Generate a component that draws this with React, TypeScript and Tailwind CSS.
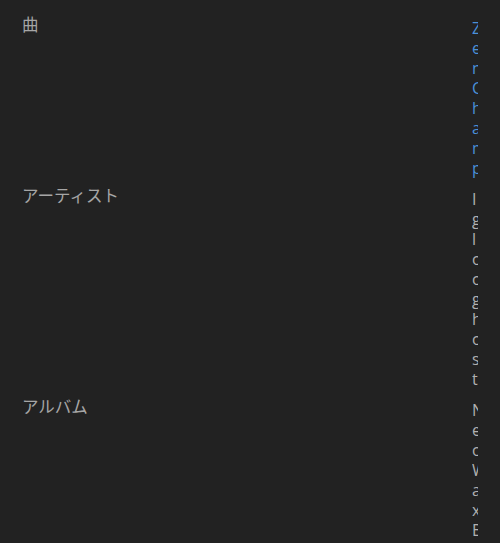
import React from "react";

const rows = [
  { label: "曲", value: "Zen Champ", link: true },
  { label: "アーティスト", value: "Iglooghost", link: false },
  { label: "アルバム", value: "Neo Wax Bloom", link: false },
];

export default function App() {
  return (
    <div className="h-[543px] w-full overflow-hidden bg-[#222222] pt-[9px]">
      <dl className="flex flex-col">
        {rows.map((row) => (
          <div key={row.label} className="flex pt-[5px] pb-[2px] pl-[22px] pr-[22px]">
            <dt className="flex-1 text-[16.5px] leading-[20px] text-[#a6a6a6] [font-family:'Noto_Sans_CJK_JP','Noto_Sans',sans-serif]">
              {row.label}
            </dt>
            <dd
              className={
                "w-[6px] overflow-hidden break-all pt-[4px] text-[16px] leading-[20px] [font-family:'Open_Sans','Noto_Sans',sans-serif] " +
                (row.link ? "text-[#4a90d9]" : "text-[#b0b0b0]")
              }
            >
              {row.value}
            </dd>
          </div>
        ))}
      </dl>
    </div>
  );
}
